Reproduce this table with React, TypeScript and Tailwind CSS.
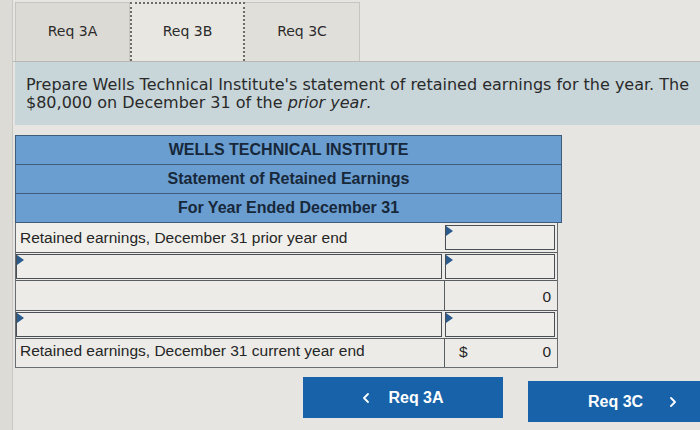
import { ChevronLeft, ChevronRight } from "lucide-react";

const Flag = () => (
  <span className="absolute left-0 top-0 h-0 w-0 border-y-[5px] border-l-[7px] border-y-transparent border-l-[#2a5b8c]" />
);

function InputBox({ flag = true, className = "" }: { flag?: boolean; className?: string }) {
  return (
    <div className={`relative h-full border border-[#4a4f55] bg-[#eeedea] ${className}`}>
      {flag && <Flag />}
    </div>
  );
}

const headerRows = ["WELLS TECHNICAL INSTITUTE", "Statement of Retained Earnings", "For Year Ended December 31"];

export default function App() {
  return (
    <main className="flex h-[430px] w-[700px] overflow-hidden bg-[#e6e5e1] text-[#222]">
      <div className="w-[13px] shrink-0 border-r border-[#c9c8c3] bg-[#dcdbd6]" />

      <div className="flex min-w-0 flex-1 flex-col">
        {/* tabs */}
        <div className="flex h-[62px] shrink-0 border-b border-[#b9b8b4] pl-[2px] pt-[2px] font-['DejaVu_Sans',sans-serif] text-[14px] text-[#2b2b2b]">
          <button className="flex w-[115px] items-center justify-center border border-b-0 border-[#c6c5c0] bg-[#dcdad5] pb-[2px]">
            Req 3A
          </button>
          <button className="flex w-[115px] items-center justify-center border-2 border-dotted border-b-0 border-[#6d6c68] bg-[#e8e7e2] pb-[2px]">
            Req 3B
          </button>
          <button className="flex w-[115px] items-center justify-center border border-b-0 border-l-0 border-[#c6c5c0] bg-[#e1dfda] pb-[2px]">
            Req 3C
          </button>
        </div>

        {/* instruction */}
        <div className="ml-[2px] h-[63px] shrink-0 overflow-hidden whitespace-nowrap bg-[#c8d6da] pl-[11px] pt-[14px] font-['DejaVu_Sans',sans-serif] text-[16px] leading-[18px] text-[#2a2a2a]">
          <p>Prepare Wells Technical Institute's statement of retained earnings for the year. The</p>
          <p>
            $80,000 on December 31 of the <i>prior year</i>.
          </p>
        </div>

        {/* statement table */}
        <div className="ml-[2px] mt-[10px] w-[547px] font-['Liberation_Sans',Arial,sans-serif]">
          <div className="border border-[#3f5d7a] bg-[#6a9dd0]">
            {headerRows.map((t, i) => (
              <div
                key={t}
                className={`flex items-center justify-center text-[16px] font-bold text-[#17283a] ${i > 0 ? "h-[29px] border-t border-[#3f5d7a]" : "h-[28px]"}`}
              >
                {t}
              </div>
            ))}
          </div>

          <div className="w-[543px] border border-t-0 border-[#6a6d70] bg-[#ecebe7] text-[15.5px] text-[#262626]">
            <div className="grid h-[30px] grid-cols-[428px_1fr] border-b border-[#5a5d60]">
              <div className="flex items-center bg-[#f0efeb] pl-[4px]">Retained earnings, December 31 prior year end</div>
              <div className="py-[2px] pl-[1px] pr-[2px]">
                <InputBox />
              </div>
            </div>

            <div className="grid h-[28px] grid-cols-[428px_1fr] border-b border-[#5a5d60]">
              <div className="py-[1px] pr-[2px]">
                <InputBox />
              </div>
              <div className="py-[1px] pl-[1px] pr-[2px]">
                <InputBox />
              </div>
            </div>

            <div className="grid h-[30px] grid-cols-[428px_1fr] border-b border-[#5a5d60]">
              <div />
              <div className="flex items-center justify-end border-l border-[#5a5d60] pr-[6px] pt-[2px]">0</div>
            </div>

            <div className="grid h-[28px] grid-cols-[428px_1fr] border-b border-[#5a5d60]">
              <div className="py-[1px] pr-[2px]">
                <InputBox />
              </div>
              <div className="py-[1px] pl-[1px] pr-[2px]">
                <InputBox />
              </div>
            </div>

            <div className="grid h-[28px] grid-cols-[428px_1fr]">
              <div className="flex items-center pb-[4px] pl-[4px]">Retained earnings, December 31 current year end</div>
              <div className="flex items-center justify-between border-l border-[#5a5d60] pb-[2px] pl-[14px] pr-[6px]">
                <span>$</span>
                <span>0</span>
              </div>
            </div>
          </div>
        </div>

        {/* nav buttons */}
        <div className="mt-[9px] flex gap-[25px] pl-[290px] font-['Liberation_Sans',Arial,sans-serif] text-[16px] font-bold text-white">
          <button className="flex h-[41px] w-[200px] shrink-0 items-center justify-center gap-[14px] bg-[#1762a9] pr-[4px]">
            <ChevronLeft size={16} strokeWidth={2.75} />
            <span>Req 3A</span>
          </button>
          <button className="mt-[4px] flex h-[41px] w-[200px] shrink-0 items-center gap-[22px] bg-[#1762a9] pl-[60px]">
            <span>Req 3C</span>
            <ChevronRight size={16} strokeWidth={2.75} />
          </button>
        </div>
      </div>
    </main>
  );
}
